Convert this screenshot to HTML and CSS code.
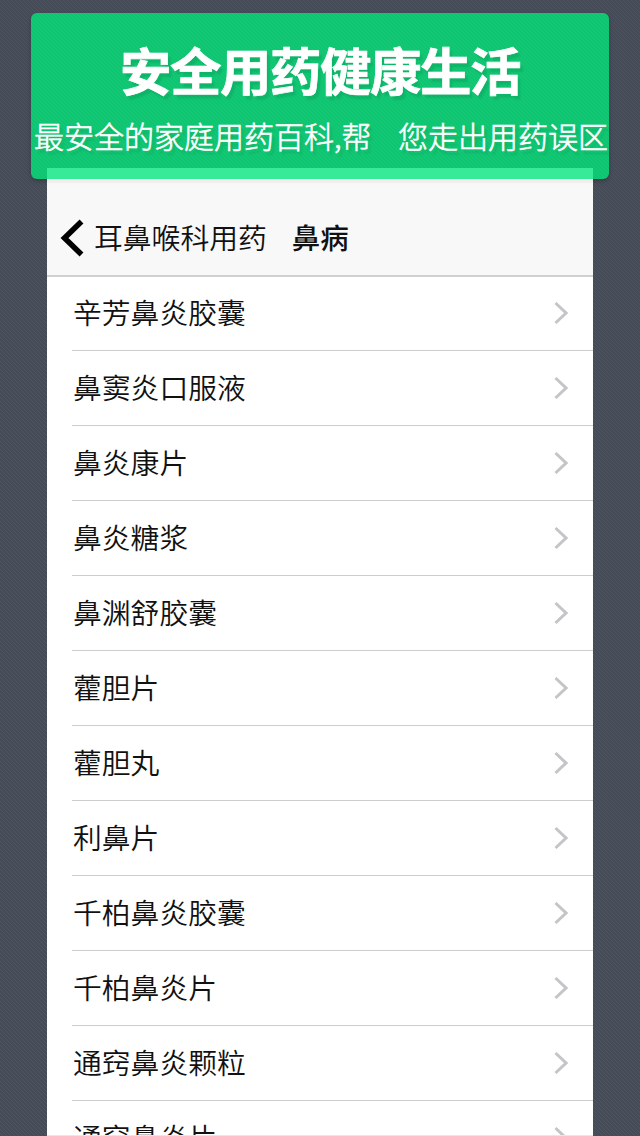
FILE: index.html
```
<!DOCTYPE html>
<html lang="zh-CN">
<head>
    <meta charset="UTF-8">
    <title>安全用药健康生活</title>
    <link rel="stylesheet" href="styles.css">
</head>
<body>
    <!-- shared chevron for the rows -->
    <svg class="sprite" width="0" height="0">
        <symbol id="chevron" viewBox="0 0 14 24">
            <path d="M1.5 2 L12 12 L1.5 22" fill="none" stroke="#c5c5c9" stroke-width="3"/>
        </symbol>
    </svg>

    <div class="banner">
        <h1>安全用药健康生活</h1>
        <p><span>最安全的家庭用药百科,帮</span><span>您走出用药误区</span></p>
    </div>

    <div class="phone">
        <div class="navbar">
            <svg class="back" width="24" height="38" viewBox="0 0 24 38">
                <path d="M21.5 2.5 L4.5 19 L21.5 35.5" fill="none" stroke="#000" stroke-width="5.5"/>
            </svg>
            <span class="back-label">耳鼻喉科用药</span>
            <span class="nav-title">鼻病</span>
        </div>
        <ul class="list">
            <li><span>辛芳鼻炎胶囊</span><svg class="chevron"><use href="#chevron"/></svg></li>
            <li><span>鼻窦炎口服液</span><svg class="chevron"><use href="#chevron"/></svg></li>
            <li><span>鼻炎康片</span><svg class="chevron"><use href="#chevron"/></svg></li>
            <li><span>鼻炎糖浆</span><svg class="chevron"><use href="#chevron"/></svg></li>
            <li><span>鼻渊舒胶囊</span><svg class="chevron"><use href="#chevron"/></svg></li>
            <li><span>藿胆片</span><svg class="chevron"><use href="#chevron"/></svg></li>
            <li><span>藿胆丸</span><svg class="chevron"><use href="#chevron"/></svg></li>
            <li><span>利鼻片</span><svg class="chevron"><use href="#chevron"/></svg></li>
            <li><span>千柏鼻炎胶囊</span><svg class="chevron"><use href="#chevron"/></svg></li>
            <li><span>千柏鼻炎片</span><svg class="chevron"><use href="#chevron"/></svg></li>
            <li><span>通窍鼻炎颗粒</span><svg class="chevron"><use href="#chevron"/></svg></li>
            <li><span>通窍鼻炎片</span><svg class="chevron"><use href="#chevron"/></svg></li>
        </ul>
    </div>
</body>
</html>
```
FILE: styles.css
```
* {
    box-sizing: border-box;
}

body {
    margin: 0;
    height: 1136px;
    padding-top: 13px;
    overflow: hidden;
    font-family: "Noto Sans CJK SC", sans-serif;
    background: repeating-linear-gradient(45deg, #454c58 0, #454c58 1.8px, #505763 2.1px, #454c58 2.828px);
}

.sprite {
    display: block;
}

/* green headline box */
.banner {
    width: 578px;
    height: 166px;
    margin: 0 auto;
    padding-top: 21px;
    border-radius: 6px;
    color: #fff;
    text-shadow: 3px 4px 2px rgba(0, 80, 40, 0.14);
    background: repeating-linear-gradient(45deg, #10c572 0, #10c572 1.8px, #16c877 2.1px, #10c572 2.828px);
    box-shadow: 0 2px 4px rgba(0, 0, 0, 0.25);
}

.banner h1 {
    margin: 0;
    text-align: center;
    font-size: 51.5px;
    letter-spacing: -1.5px;
    line-height: 70px;
    font-weight: 700;
    -webkit-text-stroke: 0.7px #fff;
}

.banner p {
    display: flex;
    justify-content: space-between;
    margin: 0;
    padding: 9px 1px 0 3px;
    font-size: 30px;
    line-height: 44px;
    font-weight: 300;
    white-space: nowrap;
    -webkit-text-stroke: 0.6px #fff;
}

/* app screen, its top edge tucks over the banner */
.phone {
    position: relative;
    width: 546px;
    height: 968px;
    margin: -11px auto 0;
    overflow: hidden;
    border-top: 11px solid #36ea98;
    border-bottom: 1px solid #e8e8e8;
    background: #fff;
    color: #111;
    font-size: 28.8px;
}

.navbar {
    display: flex;
    align-items: center;
    height: 98px;
    padding: 18px 0 0 13px;
    border-top: 4px solid #efefef;
    border-bottom: 2px solid #d0d0d0;
    background: #f8f8f8;
    line-height: 40px;
    font-weight: 350;
}

.navbar span {
    padding-bottom: 2px;
}

.back {
    margin-right: 10px;
}

.back-label {
    margin-right: 25px;
}

.nav-title {
    font-size: 28.5px;
    font-weight: 500;
}

.list {
    margin: 0;
    padding: 0 0 0 25px;
    list-style: none;
}

.list li {
    display: flex;
    align-items: center;
    justify-content: space-between;
    height: 75.06px;
    padding: 0 25px 1px 1px;
    border-bottom: 1px solid #cdcdcd;
    line-height: 40px;
    font-weight: 350;
}

.list li:first-child {
    height: 74px;
    padding-bottom: 2px;
}

.list li span {
    padding-bottom: 2px;
}

.chevron {
    width: 14px;
    height: 24px;
}
```
